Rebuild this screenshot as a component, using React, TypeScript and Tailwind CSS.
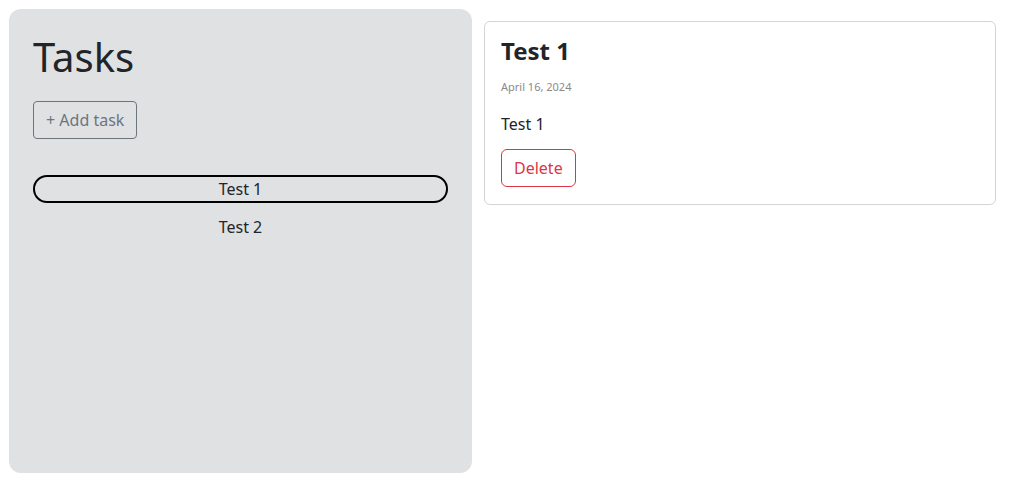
import React, { useState } from "react";

interface Task {
  id: number;
  title: string;
  body: string;
  date: string;
}

const tasksData: Task[] = [
  { id: 1, title: "Test 1", body: "Test 1", date: "April 16, 2024" },
  { id: 2, title: "Test 2", body: "Test 2", date: "April 16, 2024" },
];

export default function App() {
  const [selected, setSelected] = useState(1);
  const task = tasksData.find((t) => t.id === selected)!;

  return (
    <div className="flex h-[481px] w-full gap-3 bg-white p-[9px] font-['Noto_Sans',sans-serif] text-[#212529]">
      <div className="flex h-[464px] w-[463px] shrink-0 flex-col rounded-xl bg-[#e0e1e3] px-6 pt-6">
        <h1 className="mb-5 text-[40px] leading-[48px] font-normal">Tasks</h1>
        <div>
          <button className="h-[38px] rounded-[4px] border border-[#6c757d] px-3 text-base text-[#6c757d]">
            + Add task
          </button>
        </div>
        <ul className="mt-9 flex flex-col gap-[10px]">
          {tasksData.map((t) => (
            <li key={t.id}>
              <button
                onClick={() => setSelected(t.id)}
                className={
                  t.id === selected
                    ? "h-7 w-full rounded-full border-2 border-black text-center text-base leading-6"
                    : "h-7 w-full rounded-full border-2 border-transparent text-center text-base leading-6"
                }
              >
                {t.title}
              </button>
            </li>
          ))}
        </ul>
      </div>
      <div className="flex-1 pt-3 pr-[21px]">
        <div className="rounded-md border border-[#d4d4d4] px-4 pt-3 pb-[17px]">
          <h2 className="text-2xl leading-[34px] font-bold">{task.title}</h2>
          <p className="mt-[11px] text-[11px] leading-4 text-[#8a8a8a]">{task.date}</p>
          <p className="mt-[17px] text-base leading-6">{task.body}</p>
          <button className="mt-[13px] h-[38px] rounded-md border border-[#dc3545] px-3 text-base text-[#dc3545]">
            Delete
          </button>
        </div>
      </div>
    </div>
  );
}
